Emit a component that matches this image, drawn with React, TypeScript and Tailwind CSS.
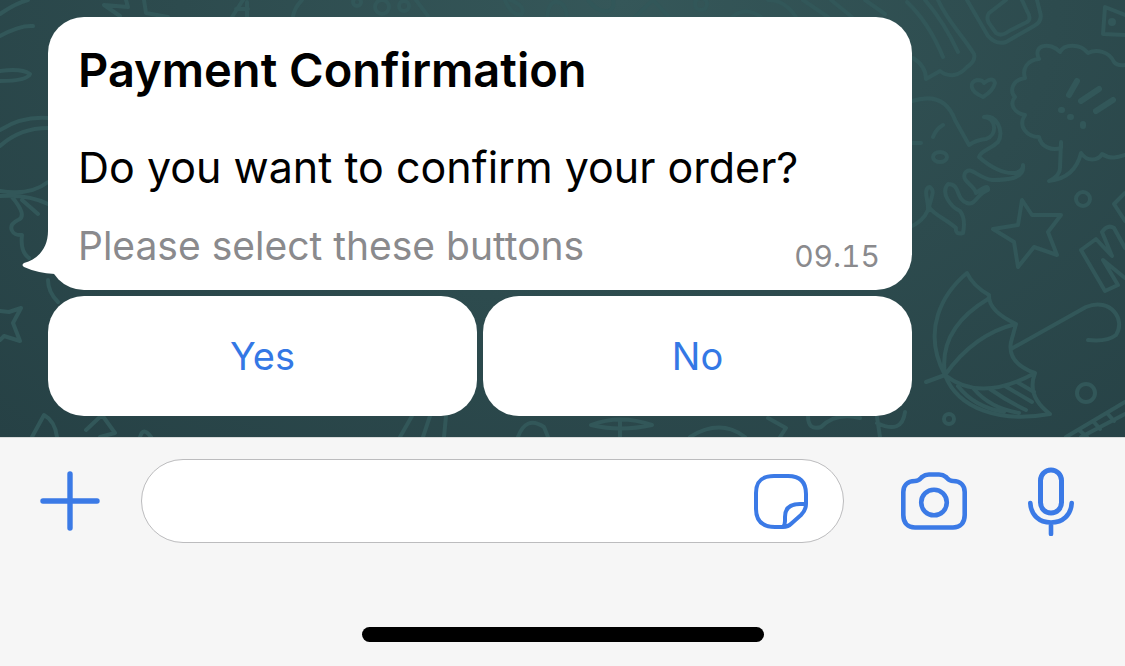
import type { ReactNode } from "react";

function Wallpaper() {
  return (
    <svg
      aria-hidden="true"
      className="absolute inset-0 h-full w-full"
      viewBox="0 0 1125 437"
      preserveAspectRatio="xMaxYMin slice"
      fill="none"
      stroke="#325759"
      strokeWidth="4"
      strokeLinecap="round"
      strokeLinejoin="round"
    >
      {/* flag, ruler and speech bubble */}
      <path d="M907 2 C924 18 936 40 943 57 M938 0 C948 22 960 32 974 54 Q976 61 967 67 C959 76 949 78 940 71 L926 79 Q926 66 913 58 M925 0 Q944 22 958 52" />
      <path d="M967 0 L988 36 Q996 45 1006 42 L1034 26 Q1043 21 1040 12 L1037 0 M989 13 Q985 19 991 26 L996 33 Q1001 37 1009 31 L1027 22 Q1032 19 1027 11 L1022 0 M989 13 L1006 0" />
      <path d="M1125 15 L1105 7 L1103 34 L1125 35" />
      <circle cx="1112" cy="22" r="2" />
      {/* cloud */}
      <path d="M1125 65 Q1117 66 1114 62 C1109 51 1096 49 1088 53 C1080 43 1064 44 1060 52 C1050 41 1032 45 1039 59 C1027 60 1022 69 1025 78 C1011 80 1010 92 1015 97 C1009 104 1014 113 1025 115 C1017 127 1028 137 1039 137 C1041 147 1052 151 1061 148 L1061 142 L1060 168 Q1060 176 1049 181 Q1075 178 1081 153 C1087 162 1098 161 1102 154 C1111 160 1119 157 1125 155" />
      <path d="M1077 81 L1069 95 M1099 89 L1081 101 M1113 100 L1096 111" strokeWidth="6" />
      <path d="M1061 110h1 M1070 117h1 M1083 124v2" strokeWidth="6" />
      {/* heart */}
      <path d="M983 97 C969 91 969 82 977 80 Q983 80 984 83 Q993 76 995 83 Q993 91 983 97Z" />
      {/* octopus */}
      <path d="M912 101 C934 94 948 101 955 120 L969 145 Q976 140 986 139 C998 135 996 118 984 117 C996 113 1005 132 998 142 C990 150 981 150 979 157 C991 168 1005 174 1014 173 Q1023 172 1023 165 C1025 179 1007 180 992 180 C978 178 970 165 965 173 C961 182 974 184 976 193 Q989 183 988 190 C977 193 976 206 967 203 C955 199 961 184 948 184 C940 193 951 207 960 211 Q966 219 963 233 Q955 235 956 228 C946 219 934 215 929 207 C932 195 935 191 930 187 C922 188 929 202 928 210 Q923 222 908 228 M912 143 L921 143 M933 137 Q936 129 943 125" />
      <ellipse cx="940" cy="157" rx="7" ry="5" />
      {/* star and rings */}
      <path d="M1022 200 L1032 215 L1061 215 L1048 232 L1057 255 L1034 247 L1018 267 L1014 242 L993 229 L1018 225Z" />
      <circle cx="1083" cy="199" r="7" />
      <circle cx="1086" cy="393" r="9" />
      <circle cx="949" cy="419" r="5" />
      <path d="M1125 193 L1114 204 L1125 221" />
      {/* letter shape */}
      <path d="M1081 250 L1096 239 L1112 256 L1102 232 Q1108 224 1114 228 L1125 248 M1081 250 L1105 291 L1118 285 L1103 260 L1125 278" />
      {/* umbrella */}
      <path d="M967 273 C943 293 921 330 945 375 C958 409 1000 423 1050 414 Q1026 396 1035 373 Q1007 363 1011 342 L1016 324 Q988 311 989 295 Q973 286 967 273Z M945 375 Q938 329 988 299 M945 375 Q974 334 1016 324 M945 375 Q980 403 1035 373 M945 375 L926 382 M1011 349 L1086 307 C1111 297 1126 320 1116 335 Q1107 342 1088 340" />
      <path d="M958 386 Q974 407 1004 412 M974 389 Q990 408 1019 413 M990 389 Q1007 401 1026 410 M1005 386 L1032 402 M1017 382 L1034 392" />
      {/* ladder */}
      <path d="M1066 437 L1125 402 M1081 437 L1125 414 M1079 430 l8 7 M1093 421 l7 8 M1107 413 l7 8" />
      {/* left edge */}
      <path d="M0 14 Q16 3 28 0 M0 36 Q20 25 33 26 M0 71 Q22 68 30 74 Q27 81 0 81 M0 130 Q22 116 48 118 M0 146 Q20 128 48 128 M0 191 Q30 196 48 182 M0 196 Q28 194 48 204 M12 197 Q28 216 18 220 C6 226 12 236 22 235 Q20 252 29 258 M22 200 L38 214 M0 311 L9 312 L21 308 L13 323 L20 341 L4 336 L0 340 M48 280 Q48 292 58 302 M32 437 L44 415 Q55 421 57 437" />
      {/* lower edge */}
      <path d="M86 430 L102 415 L115 433 L100 437 M140 437 Q143 426 151 437 M400 437 L412 416 M423 437 L430 416 M446 416 L444 437 M518 437 Q526 415 544 427 L548 437 M591 425 Q620 414 652 425 Q620 432 591 425 M620 420 V437 M690 437 Q720 418 745 437 M768 418 L786 428 L780 437 M808 416 Q808 431 821 427 Q836 412 860 418 M877 417 L880 437 M877 423 Q902 435 905 412" />
      {/* upper edge */}
      <path d="M104 5 L128 7 L126 0 M104 5 L120 16 M144 0 L146 13 L168 17 M232 17 L243 0 M247 2 V17 M236 9 H248 M293 16 Q295 7 302 0 M416 0 L428 16 M505 0 Q512 17 522 14 Q526 6 510 0 M547 17 Q549 0 558 2 Q566 4 567 17 M588 0 Q598 13 609 11 Q615 8 613 0 M635 17 L653 0 L669 17 M732 17 Q745 6 761 17 M768 0 Q785 0 796 17 M803 0 L828 17 M831 0 L852 17 M865 0 L885 14" />
      <circle cx="357" cy="2" r="4" />
      <circle cx="382" cy="7" r="7" />
      <circle cx="404" cy="6" r="5" />
      <circle cx="701" cy="4" r="6" />
    </svg>
  );
}

function Icon({ className, viewBox, children }: { className: string; viewBox: string; children: ReactNode }) {
  return (
    <svg
      aria-hidden="true"
      className={className}
      viewBox={viewBox}
      fill="none"
      stroke="currentColor"
      strokeLinecap="round"
      strokeLinejoin="round"
    >
      {children}
    </svg>
  );
}

function Message() {
  return (
    <article className="relative rounded-[36px] bg-white pt-[27px] pr-8 pb-[18px] pl-[30px]">
      <svg
        aria-hidden="true"
        className="absolute bottom-3 -left-[26px] h-[62px] w-[46px]"
        viewBox="0 0 46 62"
        fill="#fff"
      >
        <path d="M26 0 V15 C26 31 17 43 2 47 Q-1 49 2 51 Q15 57 33 58 L46 58 V0Z" />
      </svg>
      <div className="relative">
        <h1 className="text-[47px] leading-[52px] font-semibold">Payment Confirmation</h1>
        <p className="mt-[45px] text-[43px] leading-[52px]">Do you want to confirm your order?</p>
        <div className="mt-[27px] flex items-end justify-between">
          <p className="text-[39px] leading-[52px] text-[#8a8a8d]">Please select these buttons</p>
          <time className="text-[30px] leading-8 text-[#8a8a8d] tabular-nums">09.15</time>
        </div>
      </div>
    </article>
  );
}

export default function App() {
  return (
    <main
      className="flex min-h-screen flex-col bg-[#f6f6f6] text-black"
      style={{ fontFamily: 'Inter, "Liberation Sans", sans-serif' }}
    >
      <section className="relative overflow-hidden bg-[radial-gradient(ellipse_at_55%_0%,#355759_0%,#2d4b4e_50%,#264145_100%)] pt-[17px] pr-[213px] pb-[21px] pl-12">
        <Wallpaper />
        <div className="relative flex flex-col gap-[6px]">
          <Message />
          <div className="grid grid-cols-2 gap-[6px] text-[38px] text-[#3478e5]">
            <button type="button" className="h-[120px] rounded-[36px] bg-white">
              Yes
            </button>
            <button type="button" className="h-[120px] rounded-[36px] bg-white">
              No
            </button>
          </div>
        </div>
      </section>

      <footer className="flex grow flex-col justify-between border-t border-[#d8dada] px-10 pt-[21px] pb-6">
        <form className="flex items-center pr-[11px] text-[#3b7ae6]" onSubmit={(event) => event.preventDefault()}>
          <button type="button" aria-label="Add attachment" className="shrink-0">
            <Icon className="h-[60px] w-[60px]" viewBox="0 0 60 60">
              <path strokeWidth="5.4" d="M30 3V57M3 30H57" />
            </Icon>
          </button>
          <div className="ml-[41px] flex h-[84px] min-w-0 flex-1 items-center rounded-full border border-[#bcbcbe] bg-white pr-[33px] pl-8">
            <input
              type="text"
              aria-label="Message"
              className="min-w-0 flex-1 bg-transparent text-[38px] text-black outline-none"
            />
            <button type="button" aria-label="Stickers" className="shrink-0">
              <Icon className="h-[58px] w-[58px]" viewBox="0 0 58 58">
                <path
                  strokeWidth="4"
                  d="M31 55H23C9 55 4 48 4 37V21C4 9 10 4 22 4H36C48 4 54 10 54 22V32C54 36 52 40 49 43L40 51Q36 55 31 55ZM54 32H48C37 32 33 37 33 45V49Q33 53 31 55"
                />
              </Icon>
            </button>
          </div>
          <button type="button" aria-label="Camera" className="ml-[57px] shrink-0">
            <Icon className="h-[58px] w-[66px]" viewBox="0 0 66 58">
              <path
                strokeWidth="4.6"
                d="M14 9C18 9 19 7 21 5Q24 2.5 28 2.5H38Q42 2.5 45 5C47 7 48 9 52 9C60 9 63.7 14 63.7 20V43C63.7 51 59 55.5 52 55.5H14C7 55.5 2.3 51 2.3 43V20C2.3 14 6 9 14 9Z"
              />
              <circle cx="33" cy="30.5" r="12.8" strokeWidth="4.6" />
            </Icon>
          </button>
          <button type="button" aria-label="Record voice message" className="ml-[61px] shrink-0">
            <Icon className="h-[70px] w-[46px]" viewBox="0 0 46 70">
              <rect x="12.5" y="4" width="21" height="43" rx="10.5" strokeWidth="5" />
              <path strokeWidth="4.6" d="M2.3 37C3 49 11 56.5 23 56.5S43 49 43.7 37M23 57V68" />
            </Icon>
          </button>
        </form>
        <div className="h-[15px] w-[402px] self-center rounded-full bg-black" />
      </footer>
    </main>
  );
}
